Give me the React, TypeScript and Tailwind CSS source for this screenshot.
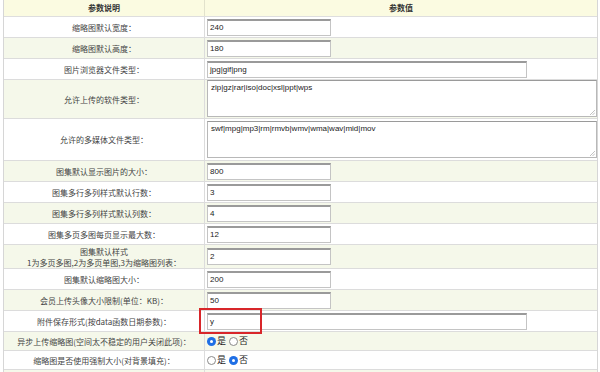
import React from "react";

const cjk = "font-['Noto_Sans_CJK_SC',sans-serif]";
const latin = "font-['Liberation_Sans','Noto_Sans_CJK_SC',sans-serif]";

type Row = {
  label: React.ReactNode;
  h: string;
  kind: "input" | "wide" | "area" | "radio";
  value?: string;
  yes?: boolean;
  areaClass?: string;
};

const rows: Row[] = [
  { label: "缩略图默认宽度：", h: "h-[20px]", kind: "input", value: "240" },
  { label: "缩略图默认高度：", h: "h-[20px]", kind: "input", value: "180" },
  { label: "图片浏览器文件类型：", h: "h-[20px]", kind: "wide", value: "jpg|gif|png" },
  {
    label: "允许上传的软件类型：",
    h: "h-[38px]",
    kind: "area",
    value: "zip|gz|rar|iso|doc|xsl|ppt|wps",
    areaClass: "h-[37px] self-start",
  },
  {
    label: "允许的多媒体文件类型：",
    h: "h-[41px]",
    kind: "area",
    value: "swf|mpg|mp3|rm|rmvb|wmv|wma|wav|mid|mov",
    areaClass: "h-[37px]",
  },
  { label: "图集默认显示图片的大小：", h: "h-[20px]", kind: "input", value: "800" },
  { label: "图集多行多列样式默认行数：", h: "h-[20px]", kind: "input", value: "3" },
  { label: "图集多行多列样式默认列数：", h: "h-[20px]", kind: "input", value: "4" },
  { label: "图集多页多图每页显示最大数：", h: "h-[20px]", kind: "input", value: "12" },
  {
    label: (
      <>
        图集默认样式
        <br />
        1为多页多图,2为多页单图,3为缩略图列表：
      </>
    ),
    h: "h-[23px]",
    kind: "input",
    value: "2",
  },
  { label: "图集默认缩略图大小：", h: "h-[20px]", kind: "input", value: "200" },
  { label: "会员上传头像大小限制(单位：KB)：", h: "h-[20px]", kind: "input", value: "50" },
  { label: "附件保存形式(按data函数日期参数)：", h: "h-[20px]", kind: "wide", value: "y" },
  { label: "异步上传缩略图(空间太不稳定的用户关闭此项)：", h: "h-[18px]", kind: "radio", yes: true },
  { label: "缩略图是否使用强制大小(对背景填充)：", h: "h-[18px]", kind: "radio", yes: false },
  { label: "", h: "h-[20px]", kind: "input", value: "" },
];

function Radio({ on }: { on: boolean }) {
  return on ? (
    <span className="flex shrink-0 w-[9px] h-[9px] rounded-full bg-[#1f6fe5] items-center justify-center">
      <span className="w-[3px] h-[3px] rounded-full bg-white" />
    </span>
  ) : (
    <span className="flex shrink-0 w-[9px] h-[9px] rounded-full border border-[#8a8a8a] bg-white" />
  );
}

function Field({ row }: { row: Row }) {
  if (row.kind === "radio") {
    return (
      <div className={`flex items-center text-[9px] text-[#222] ${cjk}`}>
        <Radio on={!!row.yes} />
        <span className="ml-[1px] mr-[3px]">是</span>
        <Radio on={!row.yes} />
        <span className="ml-[1px]">否</span>
      </div>
    );
  }
  if (row.kind === "area") {
    return (
      <div
        className={`relative w-[390px] border border-[#b8b8b8] border-t-[#9a9a9a] bg-white px-[3px] pt-[1px] text-[8px] text-[#222] leading-[12px] ${latin} ${row.areaClass}`}
      >
        {row.value}
        <svg className="absolute right-[1px] bottom-[1px]" width="5" height="5" viewBox="0 0 5 5">
          <path d="M5 0 L0 5 M5 2.5 L2.5 5" stroke="#999" strokeWidth="0.6" />
        </svg>
      </div>
    );
  }
  return (
    <div
      className={`${row.kind === "wide" ? "w-[320px]" : "w-[124px]"} h-[17px] flex items-center border border-[#c4c4c4] border-t-[#9a9a9a] border-t-2 bg-white px-[2px] text-[8px] text-[#222] ${latin}`}
    >
      {row.value}
    </div>
  );
}

export default function App() {
  return (
    <div className="w-[600px] h-[372px] overflow-hidden bg-white">
      <div className="relative ml-[3px] w-[595px] border-l border-r border-[#d6d6d6]">
        <div className={`flex h-[17px] border-b border-[#dedede] bg-[#fbfbe1] text-[8px] font-bold text-[#333] ${cjk}`}>
          <div className="w-[201px] border-r border-[#e2e2cc] flex items-center justify-center">参数说明</div>
          <div className="flex-1 flex items-center justify-center">参数值</div>
        </div>
        {rows.map((row, i) => (
          <div
            key={i}
            className={`flex ${row.h} box-content border-b border-[#dcdcdc] ${i % 2 === 0 ? "bg-white" : "bg-[#f5f8ea]"}`}
          >
            <div
              className={`w-[201px] shrink-0 border-r border-[#dcdcdc] flex items-center justify-center text-center text-[8px] leading-[11px] text-[#444] ${cjk}`}
            >
              <span>{row.label}</span>
            </div>
            <div className="flex-1 flex items-center pl-[2px]">
              <Field row={row} />
            </div>
          </div>
        ))}
        <div className="absolute left-[195px] top-[308px] w-[63px] h-[26px] border-2 border-[#d8262a]" />
      </div>
    </div>
  );
}
